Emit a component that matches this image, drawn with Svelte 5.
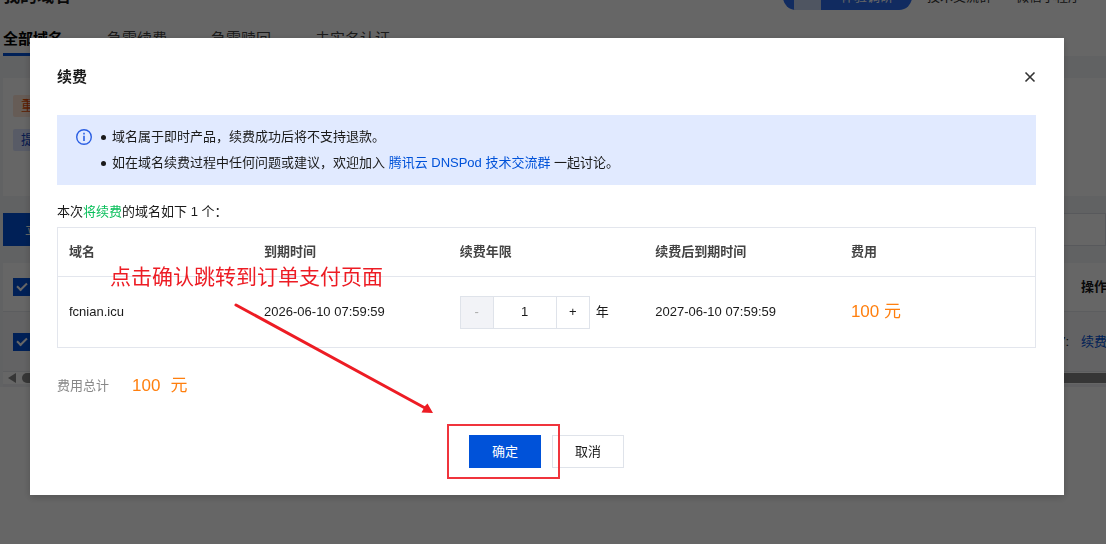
<script>
  const tabs = ['全部域名', '急需续费', '急需赎回', '未实名认证']
  const price = 100

  let years = $state(1)
  let total = $derived(price * years)
  let expiry = $derived(`${2026 + Number(years)}-06-10 07:59:59`)
</script>

<div class="page">
  <header class="page-header">
    <h1>我的域名</h1>
    <nav class="header-links">
      <a class="survey" href="#survey"><span class="survey-img"></span>体验调研</a>
      <a href="#group">技术交流群</a>
      <a href="#mini">微信小程序</a>
    </nav>
  </header>

  <nav class="tabs">
    {#each tabs as tab, i}
      <a href="#tab{i}" class:active={i === 0}>{tab}</a>
    {/each}
  </nav>

  <main class="content">
    <section class="notice">
      <span class="tag tag-warn">重要</span>
      <span class="tag tag-info">提示</span>
    </section>

    <div class="toolbar">
      <button class="btn-register">立即注册</button>
      <input class="search" type="text" aria-label="搜索" />
    </div>

    <div class="list">
      <div class="list-row">
        <input type="checkbox" checked aria-label="全选" />
        <strong class="op">操作</strong>
      </div>
      <div class="list-row list-item">
        <input type="checkbox" checked aria-label="fcnian.icu" />
        <span class="time">07:</span>
        <a class="op" href="#renew">续费</a>
      </div>
      <div class="scrollbar">
        <svg width="8" height="10" viewBox="0 0 8 10"><path d="M8 0v10L0 5z" fill="#888" /></svg>
        <div class="thumb"></div>
      </div>
    </div>
  </main>
</div>

<div class="overlay">
  <div class="dialog" role="dialog" aria-modal="true" aria-labelledby="dialog-title">
    <div class="dialog-header">
      <h2 id="dialog-title">续费</h2>
      <button class="close" aria-label="关闭">
        <svg width="12" height="12" viewBox="0 0 12 12"><path d="M1.5 1.5l9 9M10.5 1.5l-9 9" stroke="#333" stroke-width="1.6" /></svg>
      </button>
    </div>

    <div class="alert">
      <svg class="info" width="18" height="18" viewBox="0 0 18 18">
        <circle cx="9" cy="9" r="7.3" fill="none" stroke="#2b5fe3" stroke-width="1.4" />
        <path d="M9 4.8v1.7M9 7.8v5.2" stroke="#2b5fe3" stroke-width="1.6" />
      </svg>
      <ul>
        <li>域名属于即时产品，续费成功后将不支持退款。</li>
        <li>如在域名续费过程中任何问题或建议，欢迎加入 <a href="#dnspod">腾讯云 DNSPod 技术交流群</a> 一起讨论。</li>
      </ul>
    </div>

    <p class="summary">本次<span class="green">将续费</span>的域名如下 1 个：</p>

    <table>
      <thead>
        <tr>
          <th>域名</th>
          <th>到期时间</th>
          <th>续费年限</th>
          <th>续费后到期时间</th>
          <th>费用</th>
        </tr>
      </thead>
      <tbody>
        <tr>
          <td>fcnian.icu</td>
          <td>2026-06-10 07:59:59</td>
          <td>
            <div class="years">
              <div class="stepper">
                <button disabled={years <= 1} onclick={() => years--} aria-label="减少">-</button>
                <input id="years" type="text" bind:value={years} />
                <button onclick={() => years++} aria-label="增加">+</button>
              </div>
              <label for="years">年</label>
            </div>
          </td>
          <td>{expiry}</td>
          <td class="price">{total} 元</td>
        </tr>
      </tbody>
    </table>

    <div class="total">
      <span class="total-label">费用总计</span>
      <span class="price">{total}</span>
      <span class="price">元</span>
    </div>

    <div class="actions">
      <div class="confirm">
        <button class="btn btn-primary">确定</button>
        <div class="mark-box"></div>
      </div>
      <button class="btn">取消</button>
    </div>

    <div class="mark-text">点击确认跳转到订单支付页面</div>
    <svg class="mark-arrow" width="200" height="112" viewBox="0 0 200 112">
      <path d="M2 2L191 105" stroke="#ed1c24" stroke-width="3" stroke-linecap="round" />
      <path d="M199 110L187.500 109.500L190 105L189.500 104.500L193.500 100.500Z" fill="#ed1c24" />
    </svg>
  </div>
</div>

<style>
  :global(body) {
    background: #fff;
    color: #1a1a1a;
    font: 13px/26px "Liberation Sans", "Noto Sans CJK SC", sans-serif;
    overflow: hidden;
  }

  h1, h2, p, ul { margin: 0; padding: 0; }
  a { text-decoration: none; color: #0052d9; }
  button, input { font: inherit; color: inherit; box-sizing: border-box; margin: 0; }

  .page-header {
    display: flex;
    justify-content: space-between;
    align-items: center;
    height: 34px;
    margin-top: -20px;
    padding: 0 25px 0 3px;
  }

  .page-header h1 { font-size: 17px; }
  .header-links { display: flex; align-items: center; gap: 24px; }
  .header-links a { color: #333; }

  .header-links .survey {
    display: flex;
    gap: 20px;
    height: 26px;
    padding: 0 19px 0 11px;
    margin-right: -9px;
    border-radius: 13px;
    overflow: hidden;
    background: #2b6cf0;
    color: #fff;
  }

  .survey-img { width: 27px; background: #c5d5f2; }

  .tabs {
    display: flex;
    gap: 44px;
    height: 42px;
    padding-left: 3px;
    font-size: 15px;
    line-height: 50px;
  }

  .tabs a { box-sizing: border-box; height: 42px; color: #444; }
  .tabs .active { font-weight: bold; color: #000; border-bottom: 3px solid #0052d9; }

  .content { background: #f3f4f7; padding: 22px 0 0 3px; }

  .notice {
    display: flex;
    flex-direction: column;
    align-items: flex-start;
    gap: 12px;
    height: 101px;
    padding-top: 17px;
    padding-left: 10px;
    background: #fff;
  }

  .tag { padding: 0 8px; line-height: 22px; border-radius: 2px; }
  .tag-warn { background: #ffe6d8; color: #e54b00; }
  .tag-info { background: #dbe4ff; color: #1546c4; }

  .toolbar { display: flex; gap: 16px; padding: 17px 0; }
  .btn-register { width: 96px; height: 33px; padding: 0; border: 0; background: #0052d9; color: #fff; white-space: nowrap; }
  .search { flex: 1; height: 33px; border: 1px solid #dcdfe6; background: #fff; }

  .list { background: #fff; }

  .list-row {
    display: flex;
    align-items: center;
    gap: 12px;
    height: 48px;
    padding-left: 10px;
    border-bottom: 1px solid #e5e8ed;
  }

  .list-item { height: 59px; background: #f8f8fa; }
  .op { width: 25px; margin-left: auto; white-space: nowrap; }
  .time { margin-left: auto; }
  .time + .op { margin-left: 0; }

  .list input {
    appearance: none;
    width: 18px;
    height: 18px;
    background: #0052d9;
    display: grid;
    place-items: center;
  }

  .list input::before {
    content: "";
    width: 8px;
    height: 4px;
    border: solid #fff;
    border-width: 0 0 2px 2px;
    transform: rotate(-45deg) translate(1px, -1px);
  }

  .scrollbar { display: flex; align-items: center; gap: 6px; height: 12px; padding-left: 5px; border-bottom: 3px solid #f0f1f4; }
  .thumb { flex: 1; height: 10px; border-radius: 5px 0 0 5px; background: #888; }

  .overlay {
    position: fixed;
    inset: 0;
    display: flex;
    align-items: flex-start;
    padding: 38px 42px 0 30px;
    background: rgba(0, 0, 0, 0.6);
  }

  .dialog {
    position: relative;
    flex: 1;
    padding: 0 28px 27px 27px;
    background: #fff;
    box-shadow: 0 2px 8px rgba(0, 0, 0, 0.2);
  }

  .dialog-header { display: flex; justify-content: space-between; align-items: center; height: 77px; }
  .dialog-header h2 { font-size: 15px; }
  .close { display: flex; padding: 0; border: 0; background: none; }

  .alert {
    display: flex;
    gap: 19px;
    padding: 9px 18px;
    background: #e1eaff;
  }

  .info { margin-top: 4px; }
  .alert ul { list-style: none; }
  .alert li { position: relative; }

  .alert li::before {
    content: "";
    position: absolute;
    left: -11px;
    top: 11px;
    width: 5px;
    height: 5px;
    border-radius: 50%;
    background: #1a1a1a;
  }

  .summary { margin: 14px 0 2px; }
  .green { color: #0abf5b; }

  table {
    width: 100%;
    table-layout: fixed;
    border-collapse: collapse;
    border: 1px solid #e3e6ed;
  }

  th, td { padding: 0 11px; text-align: left; }
  th { height: 48px; color: #444; border-bottom: 1px solid #e3e6ed; }
  td { height: 70px; }

  .years { display: flex; align-items: center; gap: 6px; }
  .stepper { display: flex; height: 33px; border: 1px solid #dfe3ea; box-sizing: border-box; }
  .stepper button { width: 32px; padding: 0; border: 0; background: #fff; }
  .stepper button:disabled { background: #f2f3f7; color: #aaa; }

  .stepper input {
    width: 64px;
    padding: 0;
    border: solid #dfe3ea;
    border-width: 0 1px;
    text-align: center;
  }

  td.price, .total .price { font-size: 17px; color: #ff7f0e; }

  .total { display: flex; align-items: center; gap: 10px; height: 28px; margin-top: 24px; }
  .total-label { margin-right: 13px; color: #888; }

  .actions { display: flex; justify-content: center; gap: 11px; margin-top: 35px; }
  .confirm { position: relative; display: flex; }

  .btn {
    width: 72px;
    height: 33px;
    padding: 0;
    border: 1px solid #dfe3ea;
    background: #fff;
  }

  .btn-primary { border-color: #0052d9; background: #0052d9; color: #fff; }

  /* hand-drawn guide marks on top of the dialog */
  .mark-box { position: absolute; inset: -11px -19px -11px -22px; border: 2px solid #f0343c; pointer-events: none; }
  .mark-text { position: absolute; left: 80px; top: 226px; font-size: 21px; color: #ed1c24; }
  .mark-arrow { position: absolute; left: 204px; top: 265px; pointer-events: none; }
</style>
